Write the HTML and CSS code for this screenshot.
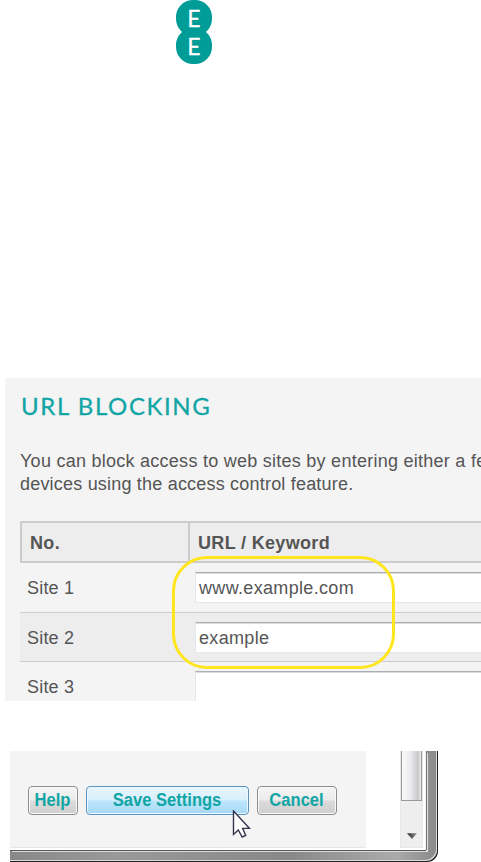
FILE: index.html
```html
<!DOCTYPE html>
<html lang="en">
<head>
<meta charset="utf-8">
<title>URL Blocking</title>
<link rel="stylesheet" href="styles.css">
</head>
<body>
<header class="brand">
  <div class="logo"><span>E</span><span>E</span></div>
</header>
<main class="panel">
  <h1>URL BLOCKING</h1>
  <p class="intro"><span class="line1">You can block access to web sites by entering either a fe</span><br><span class="line2">devices using the access control feature.</span></p>
  <div class="table">
    <div class="head"><b class="no">No.</b><b class="key">URL / Keyword</b></div>
    <div class="row first"><span class="site">Site 1</span><div class="field">www.example.com</div></div>
    <div class="row alt"><span class="site">Site 2</span><div class="field">example</div></div>
    <div class="row last"><span class="site">Site 3</span><div class="field"></div></div>
    <div class="highlight"></div>
  </div>
</main>
<section class="window">
  <div class="client">
    <div class="actions">
      <div class="btn help"><span>Help</span></div>
      <div class="btn save"><span>Save Settings</span></div>
      <div class="btn cancel"><span>Cancel</span></div>
    </div>
    <div class="scrollbar"><div class="thumb"></div><svg width="10" height="6" viewBox="0 0 10 6"><defs><linearGradient id="a"><stop offset="0" stop-color="#222"/><stop offset="1" stop-color="#999"/></linearGradient></defs><path d="M0 .3H10L5 6Z" fill="url(#a)"/></svg></div>
  </div>
  <svg class="cursor" width="19" height="29" viewBox="0 0 19 29"><path d="M1.5 1V24.5L6.3 20L10.2 27L13.7 25.5L10.7 18.4H17.4Z" fill="#fff" stroke="#33324a" stroke-width="1.4"/></svg>
</section>
</body>
</html>
```
FILE: styles.css
```css
* { box-sizing: border-box; }
body {
  margin: 0;
  width: 481px;
  height: 862px;
  overflow: hidden;
  background: #fff;
  font-family: "Liberation Sans", Arial, sans-serif;
  color: #555;
}
.brand { height: 378px; padding-left: 176px; }
.logo {
  width: 36px;
  height: 64px;
  padding: 4px 0;
  isolation: isolate;
}
.logo span {
  display: block;
  position: relative;
  height: 28px;
  color: #fff;
  font: 23px/29px Lato, sans-serif;
  -webkit-text-stroke: .3px #fff;
  text-align: center;
}
.logo span::before {
  content: "";
  position: absolute;
  inset: -4px 0;
  z-index: -1;
  border-radius: 17px;
  background: #009c98;
}
.panel {
  margin-left: 5px;
  padding-left: 15px;
  height: 323px;
  background: #f4f4f4;
  overflow: hidden;
}
h1 {
  margin: 0;
  padding: 12px 0 0 1px;
  height: 72px;
  font: 24px/32px Lato, sans-serif;
  -webkit-text-stroke: .3px #12a5a5;
  letter-spacing: 1.6px;
  color: #12a5a5;
  white-space: nowrap;
}
.intro {
  margin: 0;
  height: 71px;
  font-size: 18px;
  line-height: 23px;
  white-space: nowrap;
}
.line1 { letter-spacing: .26px; }
.line2 { letter-spacing: .2px; }
.table { position: relative; }
.head {
  height: 42px;
  display: flex;
  border: 2px solid #ccc;
  border-right: 0;
  background: #ededed;
  font-size: 18px;
  line-height: 40px;
  letter-spacing: .33px;
}
.no { width: 168px; padding-left: 8px; border-right: 2px solid #ccc; }
.key { padding-left: 8px; }
.row {
  height: 49px;
  display: flex;
  padding-top: 9px;
  border-bottom: 1px solid #ccc;
  font-size: 18px;
}
.row.first { height: 50px; }
.row.alt { background: #ededed; }
.row.last { border: 0; }
.site { width: 175px; padding-left: 7px; line-height: 32px; letter-spacing: .2px; }
.field {
  flex: 1;
  height: 31px;
  padding-left: 3px;
  border: 1px solid #e2e7f0;
  border-top-color: #abadb3;
  border-right: 0;
  background: #fff;
  box-shadow: inset 0 1px #dcdce0;
  line-height: 31px;
  letter-spacing: .33px;
}
.highlight {
  position: absolute;
  left: 152px;
  top: 35px;
  width: 223px;
  height: 113px;
  border: 3px solid #ffe51b;
  border-radius: 35px;
}
.window {
  position: relative;
  width: 428px;
  height: 111px;
  margin: 50px 0 0 10px;
  padding: 0 12px 12px 0;
  border-bottom-right-radius: 11px;
  background: linear-gradient(90deg, #888, #999 25%, #888 65%, #aaa 90%, #888);
  box-shadow: inset -1px -1px #222, inset -2px -2px #ddd;
}
.client {
  display: flex;
  height: 99px;
  background: #fff;
  border-right: 1px solid #eee;
  box-shadow: 0 1px #555, 1px 0 #777, 2px 2px #ddd;
}
.actions {
  width: 356px;
  height: 97px;
  padding: 35px 0 0 18px;
  display: flex;
  background: #f4f4f4;
  border-bottom: 1px solid #e6e6e6;
}
.btn {
  height: 29px;
  border: 1px solid #8d8d8d;
  border-radius: 4px;
  background: linear-gradient(#f5f5f5, #ebebeb 49%, #dcdcdc 51%, #cecece);
  box-shadow: inset 0 0 0 1px #fafafa;
  color: #12a5a5;
  font-weight: bold;
  font-size: 18px;
  line-height: 27px;
  text-align: center;
  white-space: nowrap;
}
.btn span { display: inline-block; margin: 0 -10px; transform: scaleX(.92); }
.help { width: 50px; }
.save {
  width: 163px;
  margin: 0 8px;
  border-color: #5c94c2;
  background: linear-gradient(#e9f6fd, #d8effc 49%, #bde6fd 51%, #a6d9f4);
  box-shadow: inset 0 0 0 1px #ecf8ff;
}
.cancel { width: 80px; }
.scrollbar {
  width: 23px;
  height: 97px;
  margin-left: 34px;
  display: flex;
  flex-direction: column;
  align-items: center;
  background: #eee;
  border: solid #e8e8e8;
  border-width: 0 1px 1px;
}
.thumb {
  width: 21px;
  height: 50px;
  border: 1px solid #999;
  border-top: 0;
  background: linear-gradient(90deg, #fafafa, #eaeaec 45%, #c8c8cc 85%, #eee);
}
.scrollbar svg { margin-top: 32px; }
.cursor { position: absolute; left: 222px; top: 59px; }
```
